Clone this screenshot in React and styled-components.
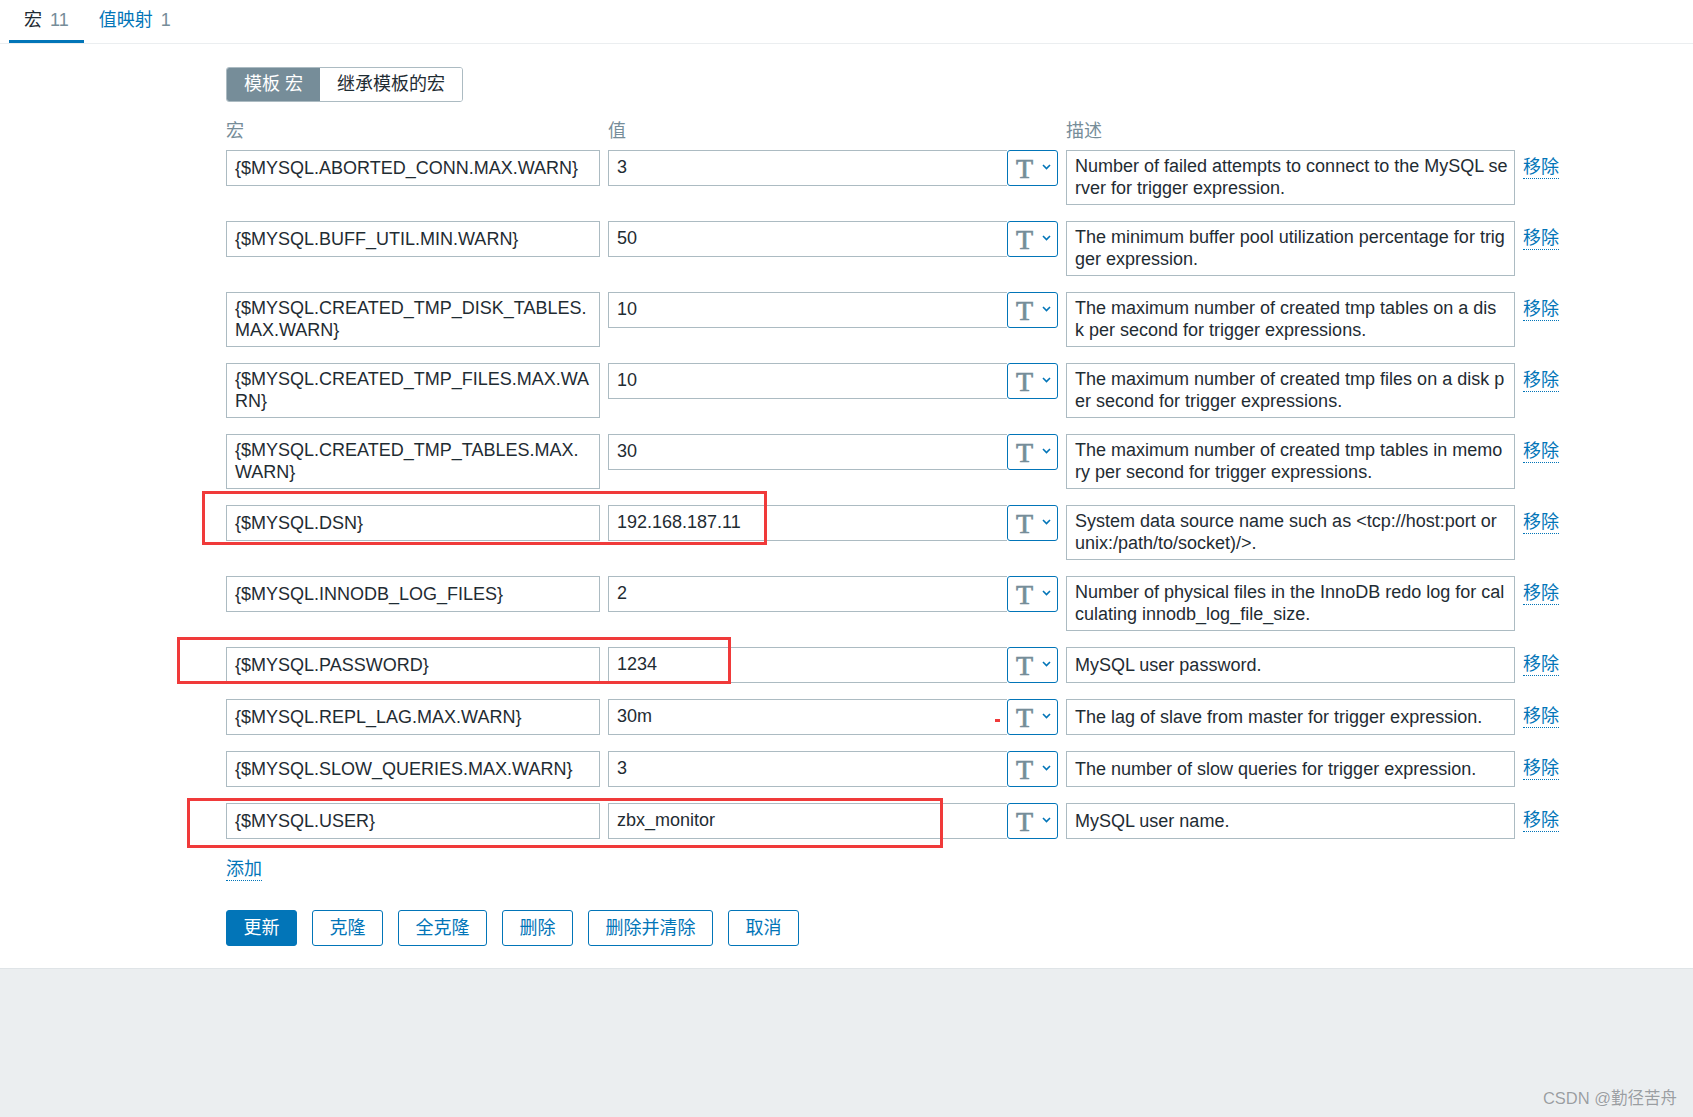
import React from "react";
import styled, { createGlobalStyle } from "styled-components";

const GlobalStyle = createGlobalStyle`
  html, body {
    margin: 0;
    padding: 0;
    background: #ffffff;
  }
  body {
    font-family: "Liberation Sans", Arial, "Noto Sans CJK SC", sans-serif;
    font-size: 18px;
    color: #1f2c33;
  }
`;

const Page = styled.div`
  min-height: 1117px;
  display: flex;
  flex-direction: column;
`;

const TabBar = styled.div`
  display: flex;
  height: 43px;
  padding-left: 9px;
  border-bottom: 1px solid #ebeef0;
`;

const Tab = styled.div`
  padding: 0 15px;
  line-height: 40px;
  white-space: nowrap;
  border-bottom: 3px solid ${(p) => (p.$active ? "#0275b8" : "transparent")};
  color: ${(p) => (p.$active ? "#1f2c33" : "#0275b8")};
`;

const TabCount = styled.span`
  color: #768d99;
  margin-left: 3px;
`;

const Content = styled.div`
  padding: 23px 0 22px 226px;
`;

const Segmented = styled.div`
  display: flex;
  width: fit-content;
  height: 35px;
  box-sizing: border-box;
  border: 1px solid #acbbc2;
  border-radius: 3px;
  overflow: hidden;
`;

const Segment = styled.div`
  padding: 0 17px;
  line-height: 33px;
  white-space: nowrap;
  background: ${(p) => (p.$active ? "#768d99" : "#ffffff")};
  color: ${(p) => (p.$active ? "#ffffff" : "#1f2c33")};
`;

const Grid = styled.div`
  display: grid;
  grid-template-columns: 374px 450px 449px auto;
  column-gap: 8px;
  align-items: start;
  position: relative;
`;

const HeaderRow = styled(Grid)`
  margin: 19px 0 8px;
  line-height: 21px;
  color: #768d99;
`;

const Rows = styled.div`
  display: flex;
  flex-direction: column;
  gap: 16px;
`;

const TextBox = styled.div`
  box-sizing: border-box;
  min-height: 36px;
  display: flex;
  flex-direction: column;
  justify-content: center;
  border: 1px solid #acbbc2;
  padding: 4px 4px 5px 8px;
  line-height: 22px;
  word-break: break-all;
  background: #ffffff;
`;

const Line = styled.span`
  white-space: nowrap;
`;

const ValueCell = styled.div`
  display: flex;
  height: 36px;
`;

const ValueInput = styled.div`
  flex: 1;
  box-sizing: border-box;
  height: 36px;
  border: 1px solid #acbbc2;
  border-right: none;
  padding: 0 8px 1px;
  line-height: 33px;
  white-space: nowrap;
`;

const TypeButton = styled.button`
  width: 51px;
  height: 36px;
  box-sizing: border-box;
  margin: 0;
  padding: 0 0 0 8px;
  display: flex;
  align-items: center;
  border: 1px solid #0275b8;
  border-radius: 3px;
  background: #ffffff;
  cursor: pointer;
`;

const TGlyph = styled.span`
  font-family: "Liberation Serif", "Times New Roman", serif;
  font-size: 28px;
  line-height: 1;
  color: #768d99;
  -webkit-text-stroke: 0.7px #768d99;
  margin-top: 1px;
`;

const Chevron = styled.svg`
  margin-left: 9px;
  margin-top: -2px;
`;

const TextLink = styled.a`
  justify-self: start;
  width: fit-content;
  color: #0275b8;
  line-height: 21px;
  border-bottom: 1px dotted #0275b8;
  cursor: pointer;
`;

const RemoveLink = styled(TextLink)`
  margin-top: 7px;
`;

const AddLink = styled(TextLink)`
  display: block;
  margin-top: 20px;
`;

const Annotation = styled.div`
  position: absolute;
  box-sizing: border-box;
  left: ${(p) => p.$left}px;
  top: ${(p) => p.$top}px;
  width: ${(p) => p.$width}px;
  height: ${(p) => p.$height}px;
  border: 3px solid #f03a3a;
  pointer-events: none;
`;

const RedDash = styled.div`
  position: absolute;
  left: 769px;
  top: 20px;
  width: 5px;
  height: 3px;
  background: #f03a3a;
`;

const ButtonBar = styled.div`
  display: flex;
  gap: 15px;
  margin-top: 29px;
`;

const Button = styled.button`
  height: 36px;
  box-sizing: border-box;
  padding: 0 16.5px;
  border: 1px solid #0275b8;
  border-radius: 3px;
  background: ${(p) => (p.$primary ? "#0275b8" : "#ffffff")};
  color: ${(p) => (p.$primary ? "#ffffff" : "#0275b8")};
  font-family: inherit;
  font-size: 18px;
  line-height: 34px;
  cursor: pointer;
`;

const Footer = styled.div`
  flex: 1;
  position: relative;
  background: #ebeef0;
  border-top: 1px solid #dfe4e7;
`;

const Watermark = styled.div`
  position: absolute;
  right: 16px;
  bottom: 8px;
  font-size: 16.5px;
  color: #9a9ea2;
  text-shadow: 0 0 1px #ffffff;
`;

const macros = [
  {
    name: "{$MYSQL.ABORTED_CONN.MAX.WARN}",
    value: "3",
    desc: ["Number of failed attempts to connect to the MySQL se", "rver for trigger expression."],
  },
  {
    name: "{$MYSQL.BUFF_UTIL.MIN.WARN}",
    value: "50",
    desc: ["The minimum buffer pool utilization percentage for trig", "ger expression."],
  },
  {
    name: "{$MYSQL.CREATED_TMP_DISK_TABLES.MAX.WARN}",
    value: "10",
    desc: ["The maximum number of created tmp tables on a dis", "k per second for trigger expressions."],
  },
  {
    name: "{$MYSQL.CREATED_TMP_FILES.MAX.WARN}",
    value: "10",
    desc: ["The maximum number of created tmp files on a disk p", "er second for trigger expressions."],
  },
  {
    name: "{$MYSQL.CREATED_TMP_TABLES.MAX.WARN}",
    value: "30",
    desc: ["The maximum number of created tmp tables in memo", "ry per second for trigger expressions."],
  },
  {
    name: "{$MYSQL.DSN}",
    value: "192.168.187.11",
    desc: ["System data source name such as <tcp://host:port or", "unix:/path/to/socket)/>."],
    mark: { left: -24, top: -14, width: 565, height: 54 },
  },
  {
    name: "{$MYSQL.INNODB_LOG_FILES}",
    value: "2",
    desc: ["Number of physical files in the InnoDB redo log for cal", "culating innodb_log_file_size."],
  },
  {
    name: "{$MYSQL.PASSWORD}",
    value: "1234",
    desc: ["MySQL user password."],
    mark: { left: -49, top: -10, width: 554, height: 47 },
  },
  {
    name: "{$MYSQL.REPL_LAG.MAX.WARN}",
    value: "30m",
    desc: ["The lag of slave from master for trigger expression."],
    dash: true,
  },
  {
    name: "{$MYSQL.SLOW_QUERIES.MAX.WARN}",
    value: "3",
    desc: ["The number of slow queries for trigger expression."],
  },
  {
    name: "{$MYSQL.USER}",
    value: "zbx_monitor",
    desc: ["MySQL user name."],
    mark: { left: -39, top: -5, width: 756, height: 50 },
  },
];

const buttons = ["更新", "克隆", "全克隆", "删除", "删除并清除", "取消"];

const MacroRow = ({ item }) => (
  <Grid>
    <TextBox>
      <span>{item.name}</span>
    </TextBox>
    <ValueCell>
      <ValueInput>{item.value}</ValueInput>
      <TypeButton>
        <TGlyph>T</TGlyph>
        <Chevron width="9" height="6" viewBox="0 0 9 6">
          <path d="M1 1 L4.5 4.5 L8 1" fill="none" stroke="#0275b8" strokeWidth="1.6" />
        </Chevron>
      </TypeButton>
    </ValueCell>
    <TextBox>
      {item.desc.map((line) => (
        <Line key={line}>{line}</Line>
      ))}
    </TextBox>
    <RemoveLink>移除</RemoveLink>
    {item.mark && (
      <Annotation
        $left={item.mark.left}
        $top={item.mark.top}
        $width={item.mark.width}
        $height={item.mark.height}
      />
    )}
    {item.dash && <RedDash />}
  </Grid>
);

export default function App() {
  return (
    <>
      <GlobalStyle />
      <Page>
        <TabBar>
          <Tab $active>
            宏<TabCount> 11</TabCount>
          </Tab>
          <Tab>
            值映射<TabCount> 1</TabCount>
          </Tab>
        </TabBar>
        <Content>
          <Segmented>
            <Segment $active>模板 宏</Segment>
            <Segment>继承模板的宏</Segment>
          </Segmented>
          <HeaderRow>
            <div>宏</div>
            <div>值</div>
            <div>描述</div>
          </HeaderRow>
          <Rows>
            {macros.map((m) => (
              <MacroRow key={m.name} item={m} />
            ))}
          </Rows>
          <AddLink>添加</AddLink>
          <ButtonBar>
            {buttons.map((b, i) => (
              <Button key={b} $primary={i === 0}>
                {b}
              </Button>
            ))}
          </ButtonBar>
        </Content>
        <Footer>
          <Watermark>CSDN @勤径苦舟</Watermark>
        </Footer>
      </Page>
    </>
  );
}
